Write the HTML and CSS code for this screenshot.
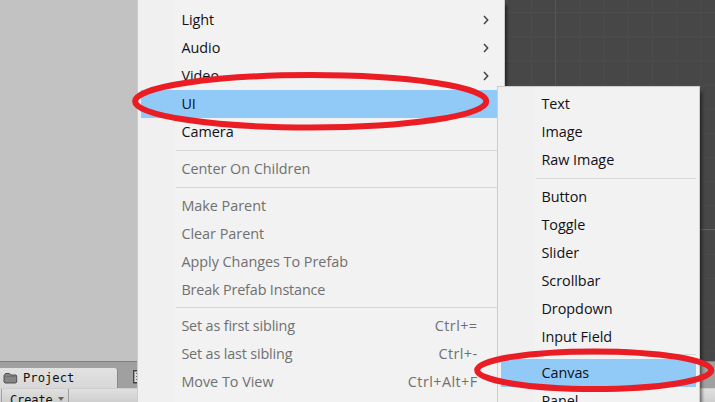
FILE: index.html
```
<!DOCTYPE html>
<html lang="en">
<head>
<meta charset="utf-8">
<title>Editor</title>
<link rel="stylesheet" href="styles.css">
</head>
<body>
<main class="editor">
  <div class="workspace">
    <div class="hierarchy"></div>
    <div class="scene"></div>
  </div>
  <div class="tabbar">
    <div class="tab">
      <svg class="folder" width="15" height="12" viewBox="0 0 15 12"><path d="M1 10V3.5L2.5 1.5h4l1.3 1.5h5.2l.7 1V10l-1 1H2z" fill="#858585" stroke="#505050"/><path d="M2 4.5h10.5" fill="none" stroke="#707070"/></svg>
      <span>Project</span>
    </div>
    <svg class="console" width="12" height="14" viewBox="0 0 12 14"><path d="M.7.7h10v12H.7z" fill="#ddd" stroke="#444" stroke-width="1.4"/><path d="M3 3.5h6M3 6.5h6M3 9.5h6" stroke="#666"/></svg>
  </div>
  <div class="toolbar"><span class="create">Create<i class="caret"></i></span></div>

  <nav class="menu main-menu">
    <div class="item"><span>Light</span><svg class="arrow" viewBox="0 0 6 10"><path d="M1 1l3.7 4L1 9"/></svg></div>
    <div class="item"><span>Audio</span><svg class="arrow" viewBox="0 0 6 10"><path d="M1 1l3.7 4L1 9"/></svg></div>
    <div class="item"><span>Video</span><svg class="arrow" viewBox="0 0 6 10"><path d="M1 1l3.7 4L1 9"/></svg></div>
    <div class="item selected"><span>UI</span></div>
    <div class="item"><span>Camera</span></div>
    <hr>
    <div class="item disabled"><span>Center On Children</span></div>
    <hr>
    <div class="item disabled"><span>Make Parent</span></div>
    <div class="item disabled"><span>Clear Parent</span></div>
    <div class="item disabled"><span>Apply Changes To Prefab</span></div>
    <div class="item disabled narrow"><span>Break Prefab Instance</span></div>
    <hr class="tight">
    <div class="item disabled narrow"><span>Set as first sibling</span><kbd>Ctrl+=</kbd></div>
    <div class="item disabled narrow"><span>Set as last sibling</span><kbd>Ctrl+-</kbd></div>
    <div class="item disabled"><span>Move To View</span><kbd>Ctrl+Alt+F</kbd></div>
  </nav>

  <nav class="menu sub-menu">
    <div class="item"><span>Text</span></div>
    <div class="item"><span>Image</span></div>
    <div class="item"><span>Raw Image</span></div>
    <hr>
    <div class="item"><span>Button</span></div>
    <div class="item"><span>Toggle</span></div>
    <div class="item"><span>Slider</span></div>
    <div class="item"><span>Scrollbar</span></div>
    <div class="item"><span>Dropdown</span></div>
    <div class="item"><span>Input Field</span></div>
    <hr class="tight">
    <div class="item selected"><span>Canvas</span></div>
    <div class="item"><span>Panel</span></div>
  </nav>

  <svg class="marks" width="715" height="402" viewBox="0 0 715 402">
    <ellipse cx="310.7" cy="101.3" rx="175.6" ry="26.2"/>
    <ellipse cx="594.2" cy="370.2" rx="117" ry="18.8"/>
  </svg>
</main>
</body>
</html>
```
FILE: styles.css
```
* { box-sizing: border-box; }
body { margin: 0; overflow: hidden; }
.editor {
  position: relative;
  width: 715px;
  height: 402px;
  overflow: hidden;
  display: flex;
  flex-direction: column;
  font: 14.4px/28px "Open Sans", "Noto Sans", sans-serif;
  color: #111116;
}
.workspace { display: flex; height: 361px; }
.hierarchy { width: 300px; background: #c2c2c2; }
.scene {
  flex: 1;
  background:
    linear-gradient(#626262, #626262) 0 229px / 100% 1px no-repeat,
    linear-gradient(#555, #555) 255px 0 / 1px 100% no-repeat,
    repeating-linear-gradient(90deg, transparent 0 14px, #4b4b4b 14px 15px, transparent 15px 24.2px) 217px 0,
    repeating-linear-gradient(transparent 0 12px, #4c4c4c 12px 13px, transparent 13px 24.2px),
    #474747;
  background:
    linear-gradient(#626262, #626262) 0 229px / 100% 1px no-repeat,
    linear-gradient(#555, #555) 255px 0 / 1px 100% no-repeat,
    linear-gradient(90deg, #4c4c4c 1px, transparent 1px) 231px 0 / 24.2px 100%,
    linear-gradient(#4c4c4c 1px, transparent 1px) 0 12px / 100% 24.2px,
    #474747;
}
.tabbar {
  display: flex;
  height: 27px;
  padding-top: 6px;
  border-top: 1px solid #808080;
  background: #a0a0a0;
  font: 12.2px/20px "DejaVu Sans Mono", monospace;
  color: #111;
}
.tab {
  display: flex;
  align-items: center;
  gap: 5px;
  width: 118px;
  padding-left: 3px;
  background: linear-gradient(#e2e2e2, #d8d8d8);
  border-right: 1px solid #888;
  border-radius: 0 3px 0 0;
}
.console { margin: 2px 0 0 15px; }
.toolbar {
  height: 14px;
  background: linear-gradient(#e0e0e0, #cfcfcf);
  border-top: 1px solid #cecece;
  font: 12px/23px "DejaVu Sans Mono", monospace;
  color: #111;
}
.create {
  display: flex;
  width: 68px;
  height: 23px;
  margin-left: 1px;
  padding-left: 8px;
  border: solid #a0a0a0;
  border-width: 0 1px;
  letter-spacing: -.1px;
}
.caret { width: 0; height: 0; margin: 8px 0 0 5px; border: 3px solid transparent; border-top: 4px solid #666; border-bottom: 0; }
.menu {
  position: absolute;
  border: 1px solid #ccc;
  background: linear-gradient(90deg, #f0f0f0 37px, #f2f2f2 37px);
  box-shadow: 4px 4px 3px -2px rgba(0, 0, 0, .5);
}
.main-menu { left: 137px; top: -1px; width: 368px; height: 420px; padding: 6px 3px; }
.sub-menu { left: 497px; top: 86px; width: 203px; height: 340px; padding: 3px 3px; }
.item { display: flex; height: 28px; padding: 0 16px 0 40.4px; white-space: nowrap; letter-spacing: -.02px; }
.narrow span { letter-spacing: -.16px; }
.selected { background: #91c9f7; }
.disabled { color: #707070; }
.item kbd { margin-left: auto; margin-right: 7.5px; font: inherit; letter-spacing: .42px; }
.arrow { width: 6px; height: 10px; margin: 9px -4px 0 auto; fill: none; stroke: #444; stroke-width: 1.5; }
hr { height: 1px; margin: 4px 0 4px 35px; border: 0; background: #d7d7d7; }
hr.tight { margin: 3px 0 4px 35px; }
.marks { position: absolute; left: 0; top: 0; fill: none; stroke: #ea1c24; stroke-width: 6; }
```
